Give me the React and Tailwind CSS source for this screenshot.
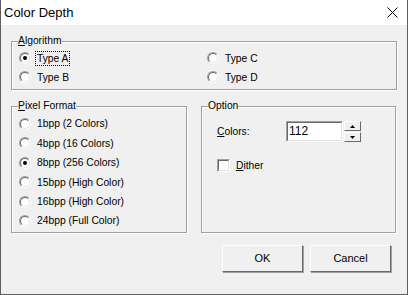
import React from "react";

const font = { fontFamily: '"Liberation Sans", Arial, sans-serif' };

function Radio({ checked }) {
  return (
    <div className="w-[12px] h-[12px] rounded-full border border-t-[#a0a0a0] border-l-[#a0a0a0] border-b-white border-r-white shrink-0">
      <div className="w-full h-full rounded-full border border-t-[#696969] border-l-[#696969] border-b-[#e3e3e3] border-r-[#e3e3e3] bg-white flex items-center justify-center">
        {checked && <div className="w-[4px] h-[4px] rounded-full bg-black" />}
      </div>
    </div>
  );
}

function RadioRow({ label, checked, focus, h = "h-[19px]" }) {
  return (
    <div className={`flex items-center ${h}`}>
      <Radio checked={checked} />
      <span
        className={`ml-[4px] px-[1px] h-[15px] leading-[13px] border border-dotted ${
          focus ? "border-black" : "border-transparent"
        }`}
      >
        {label}
      </span>
    </div>
  );
}

function Group({ legend, className, children }) {
  return (
    <fieldset className={`border border-[#a0a0a0] shadow-[inset_1px_1px_0_#fff,1px_1px_0_#fff] p-0 m-0 min-w-0 ${className}`}>
      <legend className="ml-[6px] p-0 h-[12px] leading-[12px]">{legend}</legend>
      {children}
    </fieldset>
  );
}

function Button({ children }) {
  return (
    <div className="w-[81px] h-[27px] border border-t-white border-l-white border-b-[#696969] border-r-[#696969] shadow-[1px_1px_0_#a0a0a0] bg-[#f0f0f0] flex items-center justify-center text-[11px]">
      {children}
    </div>
  );
}

export default function App() {
  return (
    <div
      className="w-[408px] h-[295px] bg-[#f0f0f0] border-l border-r border-b border-[#5e5e5e] flex flex-col text-black text-[10.3px]"
      style={font}
    >
      <div className="h-[25px] bg-white flex items-center justify-between pl-[3px] pr-[9px] shrink-0">
        <span className="text-[13px] leading-none">Color Depth</span>
        <svg width="11" height="11" viewBox="0 0 11 11">
          <path d="M0.5 0.5 L10.5 10.5 M10.5 0.5 L0.5 10.5" stroke="#000" strokeWidth="1" />
        </svg>
      </div>

      <div className="flex flex-col pl-[10px] pr-[10px] pt-[10px]">
        <Group legend={<><u>A</u>lgorithm</>} className="h-[55px]">
          <div className="grid grid-cols-[188px_1fr] pl-[7px] pt-[1.5px]">
            <RadioRow label="Type A" checked focus />
            <RadioRow label="Type C" />
            <RadioRow label="Type B" />
            <RadioRow label="Type D" />
          </div>
        </Group>

        <div className="flex gap-[14px] mt-[10px]">
          <Group legend={<><u>P</u>ixel Format</>} className="w-[176px] h-[133px]">
            <div className="flex flex-col pl-[7px] pt-[2.3px]">
              <RadioRow h="h-[19.4px]" label="1bpp (2 Colors)" />
              <RadioRow h="h-[19.4px]" label="4bpp (16 Colors)" />
              <RadioRow h="h-[19.4px]" label="8bpp (256 Colors)" checked />
              <RadioRow h="h-[19.4px]" label="15bpp (High Color)" />
              <RadioRow h="h-[19.4px]" label="16bpp (High Color)" />
              <RadioRow h="h-[19.4px]" label="24bpp (Full Color)" />
            </div>
          </Group>

          <Group legend="Option" className="w-[195px] h-[133px]">
            <div className="flex flex-col pl-[15px] pt-[9px]">
              <div className="flex items-center">
                <span className="w-[69px]">
                  <u>C</u>olors:
                </span>
                <div className="w-[57px] h-[21px] border border-t-[#a0a0a0] border-l-[#a0a0a0] border-b-white border-r-white">
                  <div className="w-full h-full border border-t-[#696969] border-l-[#696969] border-b-[#e3e3e3] border-r-[#e3e3e3] bg-white text-[12px] leading-[17px] pl-[1px]">
                    112
                  </div>
                </div>
                <div className="flex flex-col w-[17px] h-[21px] ml-[1px]">
                  <div className="h-[10px] border border-t-white border-l-white border-b-[#696969] border-r-[#696969] bg-[#f0f0f0] flex items-center justify-center">
                    <svg width="5" height="3" viewBox="0 0 5 3">
                      <path d="M2.5 0 L5 3 L0 3 Z" fill="#000" />
                    </svg>
                  </div>
                  <div className="h-[10px] mt-[1px] border border-t-white border-l-white border-b-[#696969] border-r-[#696969] bg-[#f0f0f0] flex items-center justify-center">
                    <svg width="5" height="3" viewBox="0 0 5 3">
                      <path d="M0 0 L5 0 L2.5 3 Z" fill="#000" />
                    </svg>
                  </div>
                </div>
              </div>
              <div className="flex items-center mt-[16px]">
                <div className="w-[13px] h-[13px] border border-t-[#a0a0a0] border-l-[#a0a0a0] border-b-white border-r-white">
                  <div className="w-full h-full border border-t-[#696969] border-l-[#696969] border-b-[#e3e3e3] border-r-[#e3e3e3] bg-white" />
                </div>
                <span className="ml-[6px]">
                  <u>D</u>ither
                </span>
              </div>
            </div>
          </Group>
        </div>

        <div className="flex justify-end gap-[7px] mt-[12px] pr-[6px]">
          <Button>OK</Button>
          <Button>Cancel</Button>
        </div>
      </div>
    </div>
  );
}
